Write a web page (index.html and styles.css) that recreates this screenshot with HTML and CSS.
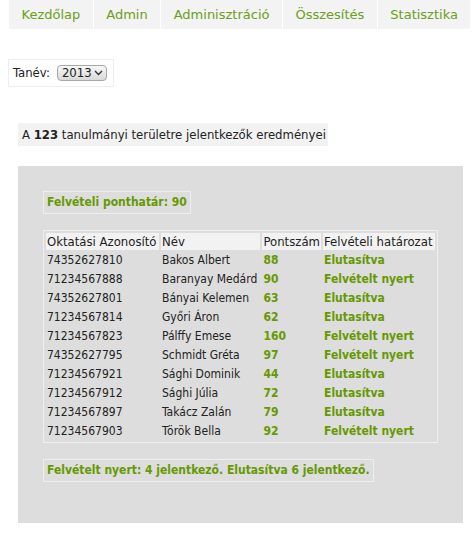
FILE: index.html
```html
<!DOCTYPE html>
<html lang="hu">
<head>
<meta charset="utf-8">
<title>Felvételi eredmények</title>
<link rel="stylesheet" href="styles.css">
</head>
<body>
<nav class="tabs">
  <a class="tab" href="#">Kezdőlap</a>
  <a class="tab" href="#">Admin</a>
  <a class="tab" href="#">Adminisztráció</a>
  <a class="tab" href="#">Összesítés</a>
  <a class="tab" href="#">Statisztika</a>
</nav>

<div class="year-box">
  <label class="year-label" for="year">Tanév:</label>
  <span class="select-wrap">
    <select id="year" class="year-select"><option>2013</option></select>
    <svg class="chevron" width="9" height="6" viewBox="0 0 9 6"><path d="M1 1 L4.5 4.5 L8 1" fill="none" stroke="#333" stroke-width="1.4"/></svg>
  </span>
</div>

<div class="info">A <b>123</b> tanulmányi területre jelentkezők eredményei</div>

<section class="panel">
  <div class="note">Felvételi ponthatár: 90</div>
  <table class="results">
    <colgroup>
      <col class="c-id"><col class="c-name"><col class="c-pts"><col class="c-dec">
    </colgroup>
    <thead>
      <tr><th>Oktatási Azonosító</th><th>Név</th><th>Pontszám</th><th>Felvételi határozat</th></tr>
    </thead>
    <tbody>
      <tr><td>74352627810</td><td>Bakos Albert</td><td class="hl">88</td><td class="hl">Elutasítva</td></tr>
      <tr><td>71234567888</td><td>Baranyay Medárd</td><td class="hl">90</td><td class="hl">Felvételt nyert</td></tr>
      <tr><td>74352627801</td><td>Bányai Kelemen</td><td class="hl">63</td><td class="hl">Elutasítva</td></tr>
      <tr><td>71234567814</td><td>Győri Áron</td><td class="hl">62</td><td class="hl">Elutasítva</td></tr>
      <tr><td>71234567823</td><td>Pálffy Emese</td><td class="hl">160</td><td class="hl">Felvételt nyert</td></tr>
      <tr><td>74352627795</td><td>Schmidt Gréta</td><td class="hl">97</td><td class="hl">Felvételt nyert</td></tr>
      <tr><td>71234567921</td><td>Sághi Dominik</td><td class="hl">44</td><td class="hl">Elutasítva</td></tr>
      <tr><td>71234567912</td><td>Sághi Júlia</td><td class="hl">72</td><td class="hl">Elutasítva</td></tr>
      <tr><td>71234567897</td><td>Takácz Zalán</td><td class="hl">79</td><td class="hl">Elutasítva</td></tr>
      <tr><td>71234567903</td><td>Török Bella</td><td class="hl">92</td><td class="hl">Felvételt nyert</td></tr>
    </tbody>
  </table>
  <div class="note summary">Felvételt nyert: 4 jelentkező. Elutasítva 6 jelentkező.</div>
</section>
</body>
</html>
```

FILE: styles.css
```css
html, body {
  margin: 0;
  padding: 0;
  background: #ffffff;
}
body {
  padding: 0 8px;
  font-family: "DejaVu Sans Condensed", "DejaVu Sans", sans-serif;
  font-stretch: condensed;
  color: #2a2a2a;
  font-size: 12px;
}

.tabs {
  display: flex;
  flex-wrap: nowrap;
  white-space: nowrap;
  height: 29px;
}
.tab {
  display: block;
  margin-left: 1px;
  padding: 0 12.5px;
  height: 29px;
  line-height: 29px;
  background: #f2f3f2;
  color: #6c9e20;
  font-family: "DejaVu Sans", sans-serif;
  font-stretch: normal;
  font-size: 13px;
  text-decoration: none;
  flex: none;
}

.year-box {
  display: inline-flex;
  align-items: center;
  gap: 7px;
  margin-top: 30px;
  padding: 5px 6px 5px 4px;
  border: 1px solid #eeeeee;
  font-size: 13px;
  line-height: 16px;
}
.year-label {
  color: #222;
}
.select-wrap {
  position: relative;
  display: inline-block;
  height: 16px;
}
.year-select {
  appearance: none;
  -webkit-appearance: none;
  display: block;
  box-sizing: border-box;
  width: 50px;
  height: 16px;
  margin: 0;
  padding: 0 0 0 4px;
  border: 1px solid #a8a8a8;
  border-radius: 4px;
  background: linear-gradient(#f7f7f7, #d9d9d9);
  font-family: "DejaVu Sans Condensed", "DejaVu Sans", sans-serif;
  font-stretch: condensed;
  font-size: 13px;
  line-height: 14px;
  color: #222;
}
.chevron {
  position: absolute;
  right: 4px;
  top: 5px;
  pointer-events: none;
}

.info {
  display: block;
  width: fit-content;
  margin: 36px 0 0 10px;
  padding: 4px 2px 4px 4px;
  background: #f2f2f2;
  font-size: 13px;
  line-height: 15px;
  color: #222;
}
.info b {
  font-weight: bold;
}

.panel {
  width: 395px;
  margin: 20px 0 0 10px;
  padding: 25px 25px 41px 25px;
  background: #dddddd;
}

.note {
  display: block;
  width: fit-content;
  padding: 3px;
  border: 1px solid #eeeeee;
  color: #669900;
  font-weight: bold;
  font-size: 12px;
  line-height: 15px;
}
.summary {
  margin-top: 16px;
}

.results {
  width: 395px;
  margin-top: 16px;
  border: 1px solid #efefef;
  border-spacing: 2px;
  font-size: 12px;
}
.c-id { width: 113px; }
.c-pts { width: 57px; }
.c-dec { width: 112px; }
.results th {
  background: #f2f2f2;
  font-weight: normal;
  text-align: left;
  font-size: 13px;
  line-height: 15px;
  padding: 1px;
  white-space: nowrap;
  color: #222;
}
.results td {
  padding: 1px;
  line-height: 15px;
  white-space: nowrap;
  color: #222;
}
.results td.hl {
  color: #669900;
  font-weight: bold;
}
```
